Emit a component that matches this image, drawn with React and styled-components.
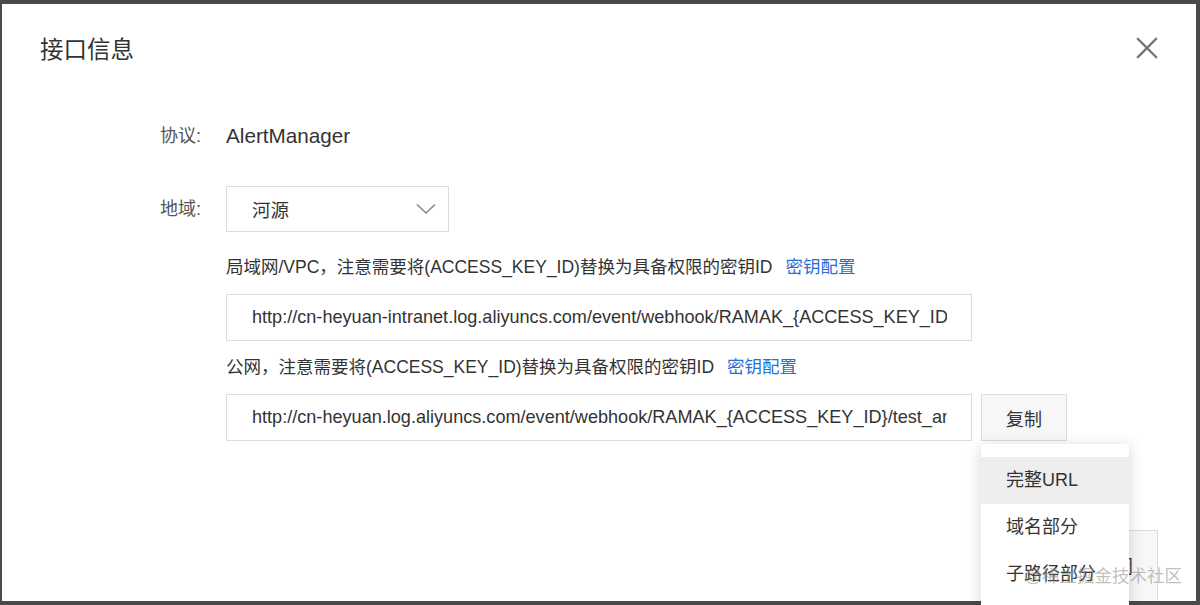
import React from "react";
import styled, { createGlobalStyle } from "styled-components";

const GlobalStyle = createGlobalStyle`
  html, body {
    margin: 0;
    padding: 0;
    background: #4a4a4a;
  }
  * {
    box-sizing: border-box;
  }
`;

const FONT = `"Liberation Sans", "Noto Sans CJK SC", sans-serif`;

const Frame = styled.div`
  position: relative;
  width: 1200px;
  height: 605px;
  padding: 4px 4px 4px 2px;
  background: #4a4a4a;
  font-family: ${FONT};
`;

const Dialog = styled.div`
  display: flex;
  flex-direction: column;
  height: 100%;
  background: #fff;
  overflow: hidden;
  padding: 29px 38px 0 38px;
`;

const Header = styled.div`
  display: flex;
  justify-content: space-between;
  align-items: center;
  height: 30px;
`;

const Title = styled.h2`
  margin: 0;
  font-size: 23.5px;
  font-weight: 400;
  color: #333;
`;

const CloseButton = styled.button`
  display: flex;
  align-items: center;
  justify-content: center;
  width: 24px;
  height: 24px;
  padding: 0;
  margin-right: -1px;
  border: 0;
  background: transparent;
  svg {
    width: 22px;
    height: 22px;
  }
`;

const Form = styled.div`
  display: grid;
  grid-template-columns: 66px 1fr;
  align-items: center;
  margin-top: 58px;
  padding-left: 120px;
`;

const Label = styled.div`
  font-size: 18px;
  color: #555;
  height: ${(p) => p.$h || 30}px;
  line-height: ${(p) => p.$h || 30}px;
  margin-top: ${(p) => p.$top || 0}px;
`;

const Value = styled.div`
  font-size: 20.7px;
  color: #333;
  height: 30px;
  line-height: 30px;
`;

const Select = styled.div`
  display: flex;
  align-items: center;
  justify-content: space-between;
  width: 223px;
  height: 46px;
  margin-top: 35px;
  padding: 0 12px 0 25px;
  border: 1px solid #dcdcdc;
  font-size: 18.5px;
  color: #333;
  svg {
    width: 20px;
    height: 12px;
  }
`;

const Block = styled.div`
  grid-column: 2;
  display: flex;
  flex-direction: column;
`;

const Notice = styled.div`
  font-size: 17.5px;
  color: #333;
  line-height: 24px;
  margin-top: ${(p) => p.$top}px;
  a {
    color: #2a6fd6;
    text-decoration: none;
    margin-left: 13px;
  }
`;

const UrlRow = styled.div`
  display: flex;
  align-items: flex-start;
  gap: 9px;
  margin-top: 15px;
`;

const UrlInput = styled.input`
  width: 746px;
  height: 47px;
  padding: 0 24px 0 25px;
  border: 1px solid #dcdcdc;
  outline: none;
  font-family: ${FONT};
  font-size: 18.1px;
  color: #333;
  background: #fff;
`;

const Button = styled.button`
  width: 86px;
  height: ${(p) => p.$h || 47}px;
  padding: 0;
  border: 1px solid #dcdcdc;
  background: #f7f7f7;
  font-family: ${FONT};
  font-size: 18px;
  color: #333;
  ${(p) => p.$alignTop && "padding-top: 2px; align-self: flex-start; line-height: 40px;"}
`;

const Footer = styled.div`
  display: flex;
  justify-content: flex-end;
  margin-top: 89px;
`;

const Menu = styled.ul`
  position: absolute;
  left: 981px;
  top: 444px;
  width: 148px;
  height: 170px;
  margin: 0;
  padding: 13px 0 0;
  list-style: none;
  background: #fff;
  box-shadow: 0 2px 14px rgba(0, 0, 0, 0.16);
`;

const MenuItem = styled.li`
  height: 47px;
  line-height: 47px;
  padding-left: 25px;
  font-size: 18px;
  color: #333;
  background: ${(p) => (p.$active ? "#eeeeee" : "transparent")};
`;

const Watermark = styled.div`
  position: absolute;
  right: 18px;
  top: 563px;
  font-size: 17.5px;
  line-height: 26px;
  color: rgba(150, 150, 150, 0.6);
  pointer-events: none;
`;

const menuItems = ["完整URL", "域名部分", "子路径部分"];

export default function App() {
  return (
    <>
      <GlobalStyle />
      <Frame>
        <Dialog>
          <Header>
            <Title>接口信息</Title>
            <CloseButton aria-label="close">
              <svg viewBox="0 0 22 22" fill="none" stroke="#777" strokeWidth="2.4" strokeLinecap="square">
                <path d="M2 2 L20 20 M20 2 L2 20" />
              </svg>
            </CloseButton>
          </Header>
          <Form>
            <Label>协议:</Label>
            <Value>AlertManager</Value>
            <Label $h={46} $top={35}>地域:</Label>
            <Select>
              <span>河源</span>
              <svg viewBox="0 0 20 12" fill="none" stroke="#888" strokeWidth="1.6">
                <path d="M1 1.5 L10 10 L19 1.5" />
              </svg>
            </Select>
            <Block>
              <Notice $top={23}>
                局域网/VPC，注意需要将(ACCESS_KEY_ID)替换为具备权限的密钥ID
                <a href="#">密钥配置</a>
              </Notice>
              <UrlRow>
                <UrlInput readOnly value="http://cn-heyuan-intranet.log.aliyuncs.com/event/webhook/RAMAK_{ACCESS_KEY_ID}/test_andy" />
              </UrlRow>
              <Notice $top={14}>
                公网，注意需要将(ACCESS_KEY_ID)替换为具备权限的密钥ID
                <a href="#">密钥配置</a>
              </Notice>
              <UrlRow>
                <UrlInput readOnly value="http://cn-heyuan.log.aliyuncs.com/event/webhook/RAMAK_{ACCESS_KEY_ID}/test_andy" />
                <Button>复制</Button>
              </UrlRow>
            </Block>
          </Form>
          <Footer>
            <Button $h={72} $alignTop>关闭</Button>
          </Footer>
        </Dialog>
        <Menu>
          {menuItems.map((item, index) => (
            <MenuItem key={index} $active={index === 0}>
              {item}
            </MenuItem>
          ))}
        </Menu>
        <Watermark>@稀土掘金技术社区</Watermark>
      </Frame>
    </>
  );
}
